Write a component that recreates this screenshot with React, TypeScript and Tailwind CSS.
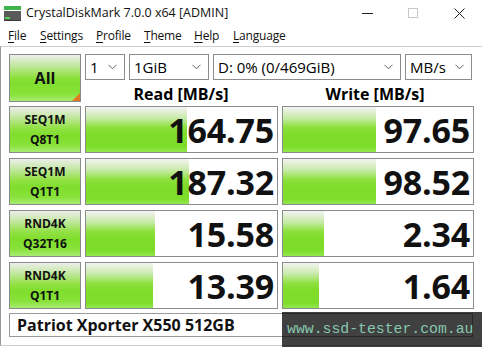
import React from "react";

const font = { fontFamily: '"Open Sans", "Noto Sans", sans-serif' };

const Chevron = () => (
  <svg width="9" height="6" viewBox="0 0 9 6" className="shrink-0">
    <path d="M0.5 0.8 L4.5 4.8 L8.5 0.8" fill="none" stroke="#606060" strokeWidth="1" />
  </svg>
);

const Select = ({ w, text }: { w: string; text: string }) => (
  <div className={`${w} h-[26px] border border-[#8c8c8c] bg-white flex items-center justify-between pl-[4px] pr-[7px]`}>
    <span className="text-[15px] leading-none text-black">{text}</span>
    <Chevron />
  </div>
);

const TestBtn = ({ a, b }: { a: string; b: string }) => (
  <div className="w-[72px] h-[47px] border border-[#8a8a8a] flex flex-col items-center justify-center bg-[linear-gradient(to_bottom,#eceeea_0%,#c4e8a4_22%,#8fe040_48%,#80de2c_62%,#88e23a_85%,#a8ec72_100%)]">
    <span className="text-[12px] font-bold leading-[20px] text-[#111]">{a}</span>
    <span className="text-[12px] font-bold leading-[20px] text-[#111]">{b}</span>
  </div>
);

const Cell = ({ w, bar, value }: { w: string; bar: number; value: string }) => (
  <div className={`${w} h-[47px] border border-[#8c8c8c] bg-white relative`}>
    <div
      className="absolute left-0 top-0 bottom-0 bg-[linear-gradient(to_bottom,#f4f4f4_0%,#c6eaa6_25%,#8ee03e_45%,#7fdd2a_60%,#7edd2a_88%,#92e64e_100%)]"
      style={{ width: bar }}
    />
    <div className="relative h-full flex items-center justify-end pr-[3px] pt-[1px]">
      <span className="text-[34px] font-bold leading-none text-[#111] tracking-[-0.2px]">{value}</span>
    </div>
  </div>
);

const rows = [
  { a: "SEQ1M", b: "Q8T1", r: "164.75", rb: 101, w: "97.65", wb: 93 },
  { a: "SEQ1M", b: "Q1T1", r: "187.32", rb: 103, w: "98.52", wb: 93 },
  { a: "RND4K", b: "Q32T16", r: "15.58", rb: 69, w: "2.34", wb: 41 },
  { a: "RND4K", b: "Q1T1", r: "13.39", rb: 67, w: "1.64", wb: 36 },
];

const Menu = ({ w, k, rest }: { w: string; k: string; rest: string }) => (
  <span className={`${w} inline-block whitespace-nowrap`}>
    <span className="underline underline-offset-2">{k}</span>
    {rest}
  </span>
);

export default function App() {
  return (
    <div className="w-[482px] h-[347px] bg-white relative overflow-hidden text-black" style={font}>
      {/* Title bar */}
      <div className="h-[26px] flex items-center">
        <svg width="17" height="15" viewBox="0 0 17 15" className="ml-[4px] mt-[1px]">
          <rect x="0" y="0" width="17" height="4" fill="#3cb54a" />
          <rect x="0" y="5" width="17" height="9" fill="#5a5a5a" />
          <rect x="1" y="11" width="5" height="2" fill="#58d058" />
          <rect x="0" y="14" width="17" height="1" fill="#3a3a3a" />
        </svg>
        <span className="ml-[5px] text-[12.5px] leading-none text-[#111]">CrystalDiskMark 7.0.0 x64 [ADMIN]</span>
        <div className="ml-auto flex items-center">
          <div className="w-[46px] flex justify-center">
            <div className="w-[11px] h-[1px] bg-[#222]" />
          </div>
          <div className="w-[46px] flex justify-center">
            <div className="w-[10px] h-[10px] border border-[#c8c8c8]" />
          </div>
          <div className="w-[46px] flex justify-center">
            <svg width="11" height="11" viewBox="0 0 11 11">
              <path d="M0.5 0.5 L10.5 10.5 M10.5 0.5 L0.5 10.5" stroke="#222" strokeWidth="1" />
            </svg>
          </div>
        </div>
      </div>
      {/* Menu bar */}
      <div className="h-[20px] flex items-center pl-[8px] text-[12px] leading-none text-[#111] tracking-[-0.2px]">
        <Menu w="w-[32px]" k="F" rest="ile" />
        <Menu w="w-[56px]" k="S" rest="ettings" />
        <Menu w="w-[48px]" k="P" rest="rofile" />
        <Menu w="w-[50px]" k="T" rest="heme" />
        <Menu w="w-[39px]" k="H" rest="elp" />
        <Menu w="w-[60px]" k="L" rest="anguage" />
      </div>
      {/* Client */}
      <div className="h-[300px] border-t border-l border-b border-[#d0d0d0] border-l-[#9a9a9a] pl-[8px] pt-[7px] flex flex-col gap-[4px]">
        {/* Top row */}
        <div className="flex gap-[4px]">
          <div className="w-[72px] h-[48px] border border-[#8a8a8a] relative flex items-center justify-center bg-[linear-gradient(to_bottom,#eceeea_0%,#c4e8a4_22%,#8fe040_48%,#80de2c_62%,#88e23a_85%,#a8ec72_100%)]">
            <span className="text-[16px] font-bold leading-none text-[#111]">All</span>
            <div className="absolute right-0 bottom-0 w-0 h-0 border-l-[8px] border-l-transparent border-b-[8px] border-b-[#e07826]" />
          </div>
          <div className="flex flex-col">
            <div className="flex gap-[4px]">
              <Select w="w-[40px]" text="1" />
              <Select w="w-[80px]" text="1GiB" />
              <Select w="w-[188px]" text="D: 0% (0/469GiB)" />
              <Select w="w-[67px]" text="MB/s" />
            </div>
            <div className="flex h-[22px] items-center pt-[5px]">
              <div className="w-[192px] text-center text-[16px] font-bold leading-none">Read [MB/s]</div>
              <div className="w-[196px] text-center text-[16px] font-bold leading-none">Write [MB/s]</div>
            </div>
          </div>
        </div>
        {/* Test rows */}
        <div className="flex flex-col gap-[5px]">
          {rows.map((r, i) => (
            <div key={i} className="flex">
              <TestBtn a={r.a} b={r.b} />
              <div className="ml-[4px]">
                <Cell w="w-[193px]" bar={r.rb} value={r.r} />
              </div>
              <div className="ml-[4px]">
                <Cell w="w-[192px]" bar={r.wb} value={r.w} />
              </div>
            </div>
          ))}
        </div>
        {/* Footer */}
        <div className="w-[464px] h-[24px] border border-[#9a9a9a] bg-white flex items-center pl-[7px]">
          <span className="text-[16px] font-bold leading-none text-[#111]">Patriot Xporter X550 512GB</span>
        </div>
      </div>
      {/* Watermark */}
      <div className="absolute left-[282px] top-[312px] w-[200px] h-[35px] bg-black/75 flex items-center pl-[5px]">
        <span className="text-[14.8px] leading-none text-[#86c7ae]" style={{ fontFamily: '"Liberation Mono", monospace' }}>
          www.ssd-tester.com.au
        </span>
      </div>
    </div>
  );
}
